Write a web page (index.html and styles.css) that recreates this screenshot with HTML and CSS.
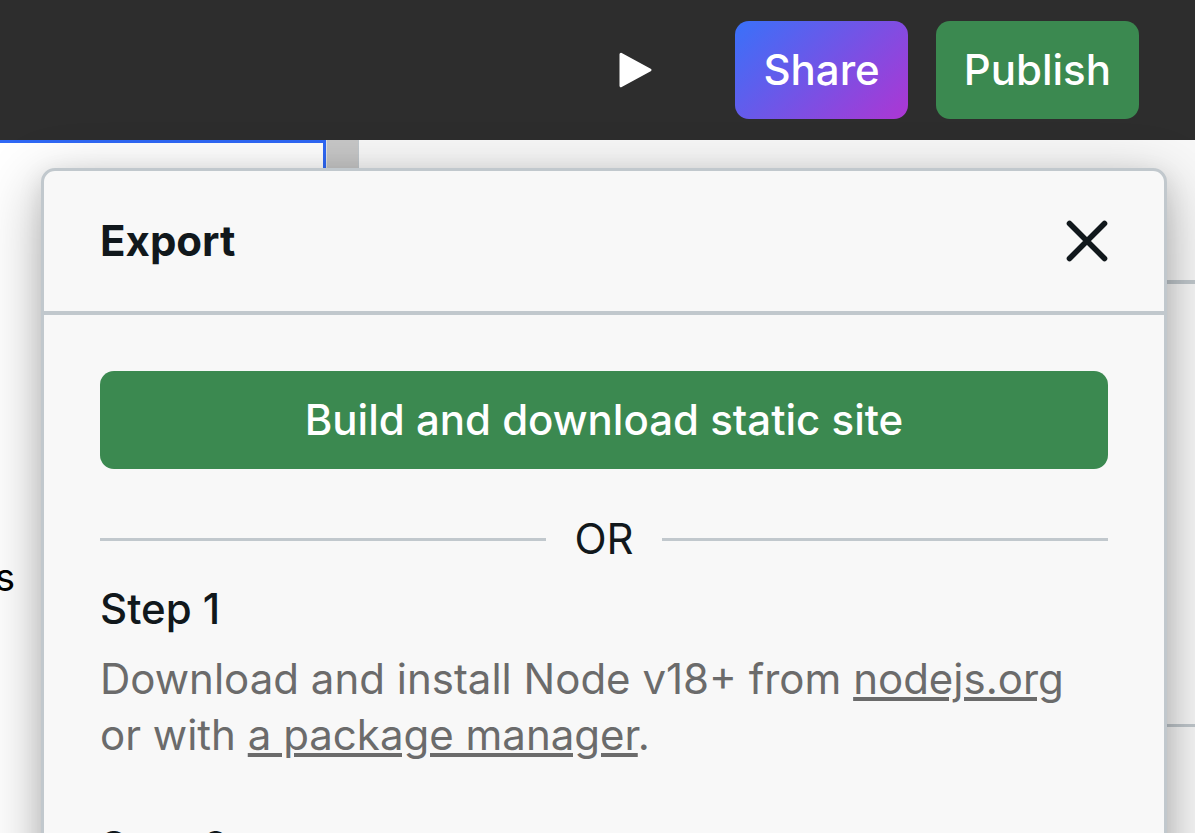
FILE: index.html
```html
<!DOCTYPE html>
<html lang="en">
<head>
<meta charset="utf-8">
<title>Export</title>
<link rel="stylesheet" href="styles.css">
</head>
<body>
<header class="topbar">
  <button class="icon-button" type="button" aria-label="Preview">
    <svg width="34" height="36" viewBox="0 0 34 36" aria-hidden="true"><path d="M2 2.2 31 18 2 33.8Z" fill="#fff" stroke="#fff" stroke-width="3" stroke-linejoin="round"/></svg>
  </button>
  <button class="button share" type="button">Share</button>
  <button class="button publish" type="button">Publish</button>
</header>
<main class="workspace">
  <div class="canvas"><p class="canvas-text">s</p></div>
  <div class="gutter"></div>
  <aside class="panel">
    <div class="panel-tabs"></div>
    <div class="panel-section"></div>
  </aside>
  <section class="popover" role="dialog" aria-labelledby="export-title">
    <div class="popover-header">
      <h1 class="title" id="export-title">Export</h1>
      <button class="close" type="button" aria-label="Close">
        <svg width="42" height="42" viewBox="0 0 42 42" aria-hidden="true"><path d="M3.5 3.5 38.5 38.5M38.5 3.5 3.5 38.5" fill="none" stroke="#11181c" stroke-width="5.6" stroke-linecap="round"/></svg>
      </button>
    </div>
    <div class="popover-body">
      <button class="button publish" type="button">Build and download static site</button>
      <div class="divider">OR</div>
      <div class="step">
        <h2 class="step-title">Step 1</h2>
        <p class="step-text">Download and install Node v18+ from <a class="link" href="#node">nodejs.org</a> or with <a class="link" href="#manager">a package manager</a>.</p>
      </div>
      <div class="step">
        <h2 class="step-title">Step 2</h2>
      </div>
    </div>
  </section>
</main>
</body>
</html>
```
FILE: styles.css
```css
* { box-sizing: border-box; }
body {
  margin: 0;
  height: 100vh;
  display: flex;
  flex-direction: column;
  overflow: hidden;
  font-family: Inter, sans-serif;
  font-size: 42px;
  line-height: 56px;
  color: #11181c;
  background: #f8f8f8;
}
h1, h2, p { margin: 0; font-size: inherit; }
button { font: inherit; border: 0; padding: 0; }
.topbar {
  height: 140px;
  flex: none;
  display: flex;
  align-items: center;
  justify-content: flex-end;
  gap: 28px;
  padding: 0 56px;
  background: #2d2d2d;
}
.icon-button {
  display: flex;
  padding: 0 26px;
  margin-right: 28px;
  background: none;
}
.button {
  height: 98px;
  padding: 0 28px;
  border-radius: 14px;
  font-weight: 500;
  color: #fff;
}
.share { background: linear-gradient(135deg, #3971f9 0%, #ad36d3 100%); }
.publish { background: #3b8950; }
.workspace {
  position: relative;
  flex: 1;
  min-height: 0;
  display: flex;
}
.canvas {
  width: 326px;
  flex: none;
  border-top: 3px solid #2f68f5;
  border-right: 3px solid #2f68f5;
  background: #fff;
  overflow: hidden;
}
.canvas-text {
  margin: 406px 0 0 -5px;
  font-size: 38px;
  color: #000;
}
.gutter {
  width: 33px;
  flex: none;
  background: #c7c7c7;
  border-left: 1px solid #dfe3e6;
  border-right: 1px solid #c1c8cd;
}
.panel { flex: 1; }
.panel-tabs { height: 144px; border-bottom: 4px solid #c1c8cd; }
.panel-section { height: 443px; border-bottom: 3px solid #c1c8cd; }
.popover {
  position: absolute;
  top: 28px;
  left: 41px;
  right: 28px;
  border: 3px solid #c1c8cd;
  border-radius: 14px;
  background: #f8f8f8;
  box-shadow: 0 17px 60px rgba(0, 0, 0, 0.3), 0 7px 24px rgba(0, 0, 0, 0.1);
}
.popover-header {
  display: flex;
  align-items: center;
  justify-content: space-between;
  height: 144px;
  padding: 0 56px;
  border-bottom: 4px solid #c1c8cd;
}
.title { font-weight: 700; }
.close { display: flex; background: none; }
.popover-body {
  display: flex;
  flex-direction: column;
  padding: 56px;
}
.divider {
  display: flex;
  align-items: center;
  gap: 28px;
  margin: 42px 0 14px;
}
.divider::before, .divider::after {
  content: "";
  flex: 1;
  height: 3px;
  background: #c1c8cd;
}
.step {
  display: flex;
  flex-direction: column;
  gap: 14px;
  margin-bottom: 56px;
}
.step-title { font-weight: 500; }
.step-text { color: #6b6b6b; }
.link { color: inherit; text-decoration: underline; }
```
